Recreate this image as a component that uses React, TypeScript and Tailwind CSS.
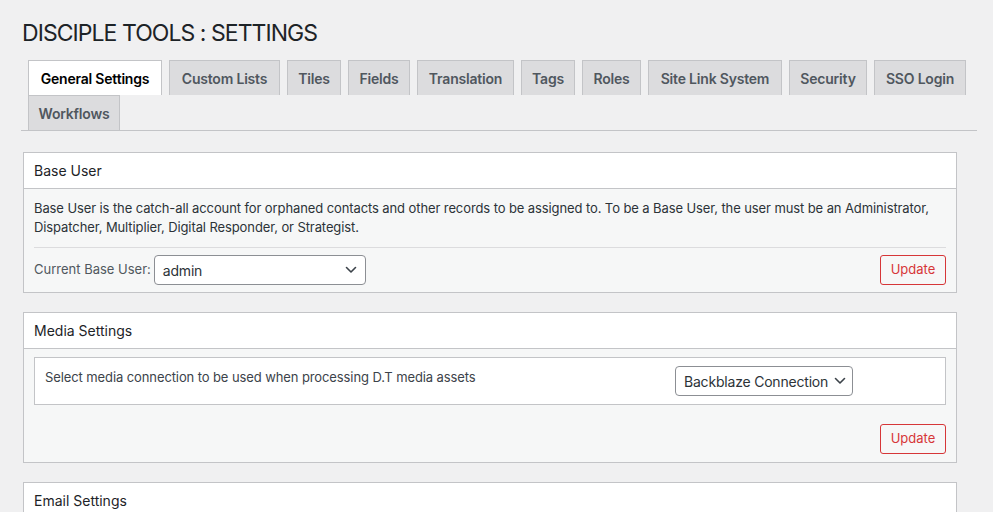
import React from 'react';

// Onglets de la page de réglages
const TABS = [
  { label: 'General Settings', w: 'w-[134px]', active: true },
  { label: 'Custom Lists', w: 'w-[111px]' },
  { label: 'Tiles', w: 'w-[54px]' },
  { label: 'Fields', w: 'w-[62px]' },
  { label: 'Translation', w: 'w-[97px]' },
  { label: 'Tags', w: 'w-[54px]' },
  { label: 'Roles', w: 'w-[59px]' },
  { label: 'Site Link System', w: 'w-[134px]' },
  { label: 'Security', w: 'w-[78px]' },
  { label: 'SSO Login', w: 'w-[92px]' },
  { label: 'Workflows', w: 'w-[92px]' },
];

function Chevron() {
  return (
    <svg width="12" height="8" viewBox="0 0 12 8" fill="none" className="shrink-0">
      <polyline
        points="1.5,1.5 6,6 10.5,1.5"
        stroke="#3c434a"
        strokeWidth="1.6"
        strokeLinecap="round"
        strokeLinejoin="round"
      />
    </svg>
  );
}

function Select({ value, className = '' }: { value: string; className?: string }) {
  return (
    <div
      className={`h-[30px] flex items-center justify-between gap-[6px] whitespace-nowrap bg-white border border-[#8c8f94] rounded-[4px] pl-[8px] pr-[8px] text-[14px] tracking-[-0.2px] text-[#2c3338] ${className}`}
    >
      <span>{value}</span>
      <Chevron />
    </div>
  );
}

function UpdateButton() {
  return (
    <button className="h-[30px] w-[66px] border border-[#d63638] rounded-[3px] bg-[#f6f7f7] text-[13px] text-[#d63638]">
      Update
    </button>
  );
}

function Postbox({ title, children }: { title: string; children?: React.ReactNode }) {
  return (
    <div className="w-[934px] border border-[#c3c4c7] bg-white mb-[19px]">
      <div className="h-[36px] flex items-center px-[10px] border-b border-[#c3c4c7] text-[14px] text-[#1d2327]">
        {title}
      </div>
      <div className="bg-[#f6f7f7] px-[10px]">{children}</div>
    </div>
  );
}

export default function App() {
  return (
    <div className="min-h-screen bg-[#f0f0f1] font-['Inter','Liberation_Sans',sans-serif] text-[#3c434a] pt-[18px]">
      <h1 className="ml-[22px] text-[23px] leading-[30px] tracking-[-0.95px] text-[#1d2327] font-normal">
        DISCIPLE TOOLS : SETTINGS
      </h1>

      {/* Barre d'onglets */}
      <div className="ml-[21px] w-[956px] mt-[12px] flex flex-wrap border-b border-[#c3c4c7]">
        {TABS.map((tab) => (
          <div
            key={tab.label}
            className={`${tab.w} ml-[7px] h-[35px] flex items-center justify-center whitespace-nowrap border border-b-0 border-[#c3c4c7] text-[14px] font-semibold tracking-[-0.2px] ${
              tab.active ? 'bg-white text-black' : 'bg-[#dcdcde] text-[#50575e]'
            }`}
          >
            {tab.label}
          </div>
        ))}
      </div>

      <div className="ml-[23px] mt-[21px]">
        {/* Base User */}
        <Postbox title="Base User">
          <div className="pt-[10px] pb-[7px]">
            <p className="text-[13px] leading-[19px] tracking-[-0.1px] text-[#2c3338]">
              Base User is the catch-all account for orphaned contacts and other records to be assigned to. To be a
              Base User, the user must be an Administrator, Dispatcher, Multiplier, Digital Responder, or Strategist.
            </p>
            <div className="mt-[10px] border-t border-[#dcdcde]" />
            <div className="mt-[7px] flex items-center justify-between">
              <div className="flex items-center gap-[3px]">
                <span className="text-[13px] text-[#50575e]">Current Base User:</span>
                <Select value="admin" className="w-[212px]" />
              </div>
              <UpdateButton />
            </div>
          </div>
        </Postbox>

        {/* Media Settings */}
        <Postbox title="Media Settings">
          <div className="pt-[8px] pb-[8px]">
            <div className="h-[48px] flex bg-white border border-[#c3c4c7]">
              <div className="w-[640px] pl-[10px] pt-[10px] text-[13px] leading-[19px] tracking-[-0.1px] text-[#3c434a]">
                Select media connection to be used when processing D.T media assets
              </div>
              <div className="self-center">
                <Select value="Backblaze Connection" className="w-[178px]" />
              </div>
            </div>
            <div className="mt-[19px] flex justify-end">
              <UpdateButton />
            </div>
          </div>
        </Postbox>

        {/* Email Settings */}
        <Postbox title="Email Settings">
          <div className="h-[120px]" />
        </Postbox>
      </div>
    </div>
  );
}
